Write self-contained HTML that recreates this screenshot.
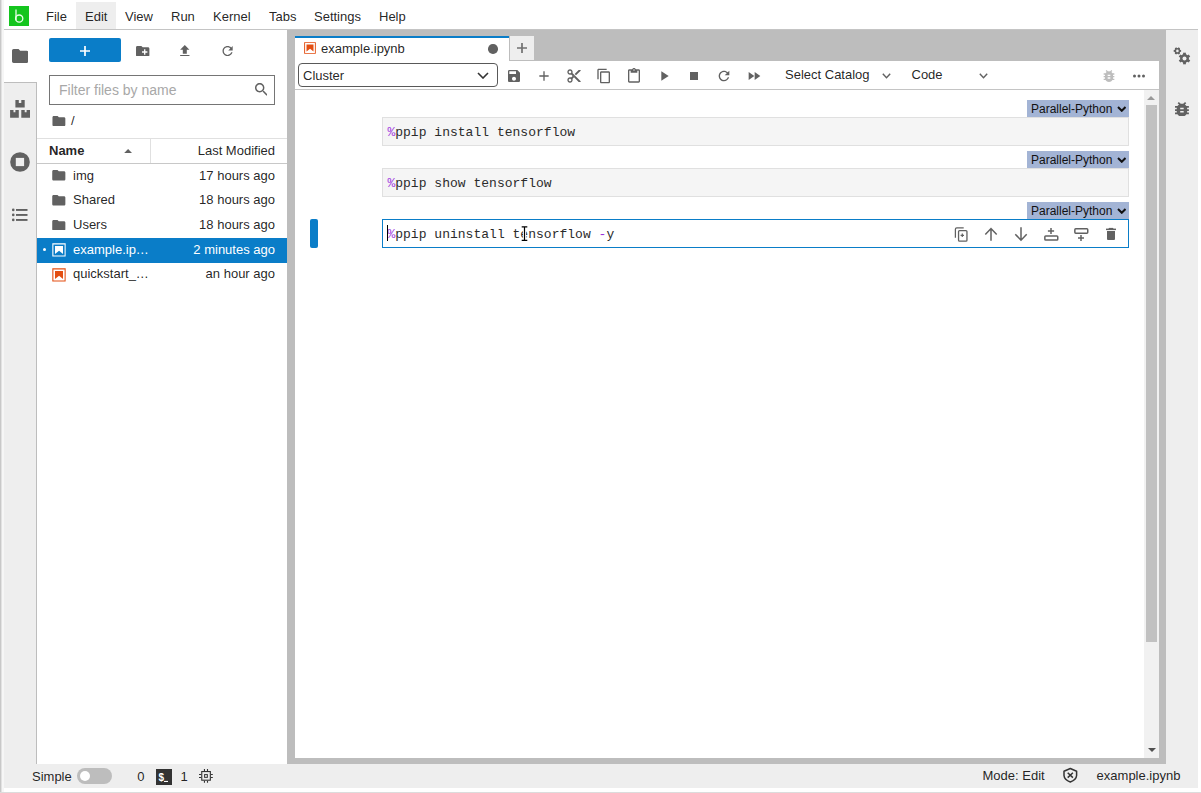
<!DOCTYPE html>
<html><head><meta charset="utf-8">
<style>
*{box-sizing:border-box;margin:0;padding:0}
html,body{width:1201px;height:793px;overflow:hidden;background:#fff;font-family:"Liberation Sans",sans-serif;font-size:13px;color:rgba(0,0,0,0.87)}
.a{position:absolute}
.t{position:absolute;white-space:nowrap;line-height:15px}
svg{position:absolute;display:block}
.ic{fill:#616161}
</style></head><body>
<!-- frame -->
<div class="a" style="left:0;top:0;width:1px;height:793px;background:#c8c8c8"></div>
<div class="a" style="left:1px;top:0;width:1px;height:793px;background:#e2e2e2"></div>
<div class="a" style="left:2px;top:0;width:2px;height:793px;background:#f6f6f6"></div>
<div class="a" style="left:0;top:792px;width:1201px;height:1px;background:#dcdcdc"></div>

<!-- menubar -->
<div class="a" style="left:4px;top:29px;width:1194px;height:1px;background:#c4c4c4"></div>
<div class="a" style="left:9px;top:6px;width:20px;height:20px;background:#14c51e"></div>
<svg style="left:9px;top:6px" width="20" height="20" viewBox="0 0 20 20"><path d="M7 3.5V14.2" stroke="#e8ffe8" stroke-width="1.3" fill="none"/><circle cx="10.2" cy="12.6" r="3.6" stroke="#e8ffe8" stroke-width="1.3" fill="none"/></svg>
<div class="a" style="left:76px;top:2px;width:40px;height:27px;background:#eeeeee"></div>
<div class="t" style="left:46px;top:9px">File</div>
<div class="t" style="left:85px;top:9px">Edit</div>
<div class="t" style="left:125px;top:9px">View</div>
<div class="t" style="left:171px;top:9px">Run</div>
<div class="t" style="left:213px;top:9px">Kernel</div>
<div class="t" style="left:269px;top:9px">Tabs</div>
<div class="t" style="left:314px;top:9px">Settings</div>
<div class="t" style="left:379px;top:9px">Help</div>

<!-- left sidebar -->
<div class="a" style="left:4px;top:82px;width:33px;height:682px;background:#eeeeee"></div>
<div class="a" style="left:4px;top:82px;width:32px;height:1px;background:#bdbdbd"></div>
<div class="a" style="left:36px;top:82px;width:1px;height:682px;background:#bdbdbd"></div>

<!-- file browser -->
<!-- file browser content -->
<div class="a" style="left:49px;top:38px;width:72px;height:24px;background:#0a7dc8;border-radius:2px"></div>
<svg style="left:80px;top:46px" width="10" height="10" viewBox="0 0 10 10"><path d="M5 0V10M0 5H10" stroke="#fff" stroke-width="1.7"/></svg>
<svg class="ic" style="left:136.3px;top:45.6px" width="13.4" height="10.7" viewBox="2 4 20 16"><path d="M20 6h-8l-2-2H4c-1.11 0-1.99.89-1.99 2L2 18c0 1.11.89 2 2 2h16c1.11 0 2-.89 2-2V8c0-1.11-.89-2-2-2zm-1 8h-3v3h-2v-3h-3v-2h3V9h2v3h3v2z"/></svg>
<svg class="ic" style="left:180.2px;top:44.9px" width="9.6" height="11.3" viewBox="5 3 14 17"><path d="M9 16h6v-6h4l-7-7-7 7h4zm-4 2h14v2H5z"/></svg>
<svg class="ic" style="left:221.7px;top:46px" width="11.2" height="10.2" viewBox="4 4 16 16"><path d="M17.65 6.35C16.2 4.9 14.21 4 12 4c-4.42 0-7.990 3.58-7.99 8s3.57 8 7.99 8c3.73 0 6.840-2.55 7.730-6h-2.080c-.82 2.33-3.040 4-5.650 4-3.310 0-6-2.690-6-6s2.690-6 6-6c1.660 0 3.140.69 4.220 1.780L13 11h7V4l-2.35 2.35z"/></svg>
<div class="a" style="left:49px;top:75px;width:226px;height:30px;border:1px solid #757575"></div>
<div class="t" style="left:59px;top:81.8px;font-size:14px;line-height:16px;color:#a8a8a8">Filter files by name</div>
<svg class="ic" style="left:254.6px;top:83.2px" width="12.7" height="12.7" viewBox="3 3 17.5 17.5"><path d="M15.5 14h-.79l-.28-.27C15.41 12.59 16 11.11 16 9.5 16 5.910 13.090 3 9.5 3S3 5.91 3 9.5 5.91 16 9.5 16c1.61 0 3.09-.59 4.23-1.57l.27.28v.79l5 4.99L20.49 19l-4.99-5zm-6 0C7.01 14 5 11.99 5 9.5S7.01 5 9.5 5 14 7.01 14 9.5 11.99 14 9.5 14z"/></svg>
<svg class="ic" style="left:52.2px;top:115.7px" width="13.8" height="10.3" viewBox="2 4 20 16"><path d="M10 4H4c-1.1 0-1.99.9-1.99 2L2 18c0 1.1.9 2 2 2h16c1.1 0 2-.9 2-2V8c0-1.1-.9-2-2-2h-8l-2-2z"/></svg>
<div class="t" style="left:71px;top:112.8px">/</div>
<div class="a" style="left:37px;top:138px;width:250px;height:1px;background:#e0e0e0"></div>
<div class="a" style="left:37px;top:162.5px;width:250px;height:1px;background:#c8c8c8"></div>
<div class="a" style="left:150px;top:138px;width:1px;height:25px;background:#e0e0e0"></div>
<div class="t" style="left:49px;top:143px;font-weight:bold">Name</div>
<svg style="left:123.9px;top:148.8px" width="8.2" height="4.3" viewBox="0 0 8 4"><path d="M0 4L4 0L8 4z" fill="#616161"/></svg>
<div class="t" style="left:150px;width:125px;top:143px;text-align:right">Last Modified</div>
<svg class="ic" style="left:52.2px;top:170.4px" width="13.6" height="10.5" viewBox="2 4 20 16"><path d="M10 4H4c-1.1 0-1.99.9-1.99 2L2 18c0 1.1.9 2 2 2h16c1.1 0 2-.9 2-2V8c0-1.1-.9-2-2-2h-8l-2-2z"/></svg>
<div class="t" style="left:73px;top:167.6px;color:rgba(0,0,0,0.87)">img</div>
<div class="t" style="left:150px;width:125px;text-align:right;top:167.6px;color:rgba(0,0,0,0.87)">17 hours ago</div>
<svg class="ic" style="left:52.2px;top:195.1px" width="13.6" height="10.5" viewBox="2 4 20 16"><path d="M10 4H4c-1.1 0-1.99.9-1.99 2L2 18c0 1.1.9 2 2 2h16c1.1 0 2-.9 2-2V8c0-1.1-.9-2-2-2h-8l-2-2z"/></svg>
<div class="t" style="left:73px;top:192.3px;color:rgba(0,0,0,0.87)">Shared</div>
<div class="t" style="left:150px;width:125px;text-align:right;top:192.3px;color:rgba(0,0,0,0.87)">18 hours ago</div>
<svg class="ic" style="left:52.2px;top:219.7px" width="13.6" height="10.5" viewBox="2 4 20 16"><path d="M10 4H4c-1.1 0-1.99.9-1.99 2L2 18c0 1.1.9 2 2 2h16c1.1 0 2-.9 2-2V8c0-1.1-.9-2-2-2h-8l-2-2z"/></svg>
<div class="t" style="left:73px;top:216.9px;color:rgba(0,0,0,0.87)">Users</div>
<div class="t" style="left:150px;width:125px;text-align:right;top:216.9px;color:rgba(0,0,0,0.87)">18 hours ago</div>
<div class="a" style="left:37px;top:238.2px;width:250px;height:24.5px;background:#0a7dc8"></div>
<div class="a" style="left:42.5px;top:248.3px;width:3px;height:3px;border-radius:50%;background:#fff"></div>
<svg style="left:51px;top:242.0px" width="16" height="16" viewBox="0 0 22 22"><g fill="#fff"><path d="M18.7 3.3v15.4H3.3V3.3h15.4m1.5-1.5H1.8v18.3h18.3l.1-18.3z"/><path d="M16.5 16.5l-5.4-4.3-5.6 4.3v-11h11z"/></g></svg>
<div class="t" style="left:73px;top:241.5px;color:#fff">example.ip…</div>
<div class="t" style="left:150px;width:125px;text-align:right;top:241.5px;color:#fff">2 minutes ago</div>
<svg style="left:51px;top:266.8px" width="16" height="16" viewBox="0 0 22 22"><g fill="#E34E12"><path d="M18.7 3.3v15.4H3.3V3.3h15.4m1.5-1.5H1.8v18.3h18.3l.1-18.3z"/><path d="M16.5 16.5l-5.4-4.3-5.6 4.3v-11h11z"/></g></svg>
<div class="t" style="left:73px;top:266.3px;color:rgba(0,0,0,0.87)">quickstart_…</div>
<div class="t" style="left:150px;width:125px;text-align:right;top:266.3px;color:rgba(0,0,0,0.87)">an hour ago</div>


<!-- splitter / dock grey -->
<div class="a" style="left:287px;top:30px;width:879px;height:734px;background:#bdbdbd"></div>
<!-- right sidebar -->
<div class="a" style="left:1166px;top:30px;width:32px;height:734px;background:#eeeeee"></div>

<!-- notebook panel -->
<div class="a" style="left:295px;top:61px;width:864px;height:697px;background:#fff"></div>

<!-- notebook tab -->
<div class="a" style="left:295px;top:36px;width:214px;height:25px;background:#fff"></div>
<div class="a" style="left:295px;top:36px;width:214px;height:2px;background:#0a7dc8"></div>
<svg style="left:302.9px;top:40.9px" width="14" height="14" viewBox="0 0 22 22"><g fill="#E34E12"><path d="M18.7 3.3v15.4H3.3V3.3h15.4m1.5-1.5H1.8v18.3h18.3l.1-18.3z"/><path d="M16.5 16.5l-5.4-4.3-5.6 4.3v-11h11z"/></g></svg>
<div class="t" style="left:321px;top:41px">example.ipynb</div>
<div class="a" style="left:488px;top:44px;width:9.5px;height:9.5px;border-radius:50%;background:#616161"></div>
<div class="a" style="left:510px;top:36px;width:24px;height:24px;background:#eeeeee"></div>
<svg style="left:517px;top:43px" width="10" height="10" viewBox="0 0 10 10"><path d="M5 0V10M0 5H10" stroke="#707070" stroke-width="1.7"/></svg>
<!-- toolbar -->
<div class="a" style="left:295px;top:89px;width:864px;height:1px;background:#c4c4c4"></div>
<div class="a" style="left:298px;top:63px;width:200px;height:24px;border:1px solid #595959;border-radius:4px"></div>
<div class="t" style="left:303px;top:68px">Cluster</div>
<svg style="left:477px;top:72px" width="12" height="7" viewBox="0 0 12 7"><path d="M1 1L6 6L11 1" stroke="#333" stroke-width="1.6" fill="none"/></svg>
<svg style="left:506px;top:68px" width="16" height="16" viewBox="0 0 24 24"><path fill="#616161" d="M17 3H5c-1.11 0-2 .9-2 2v14c0 1.1.89 2 2 2h14c1.1 0 2-.9 2-2V7l-4-4zm-5 16c-1.66 0-3-1.34-3-3s1.34-3 3-3 3 1.34 3 3-1.34 3-3 3zm3-10H5V5h10v4z"/></svg>
<svg style="left:536px;top:68px" width="16" height="16" viewBox="0 0 24 24"><path fill="#616161" d="M19 13h-6v6h-2v-6H5v-2h6V5h2v6h6v2z"/></svg>
<svg style="left:566px;top:68px" width="16" height="16" viewBox="0 0 24 24"><path fill="#616161" d="M9.64 7.64c.23-.5.36-1.05.36-1.64 0-2.21-1.79-4-4-4S2 3.79 2 6s1.79 4 4 4c.59 0 1.14-.13 1.640-.36L10 12l-2.36 2.36C7.14 14.13 6.59 14 6 14c-2.21 0-4 1.79-4 4s1.79 4 4 4 4-1.79 4-4c0-.59-.13-1.14-.36-1.64L12 14l7 7h3v-1L9.64 7.64zM6 8c-1.1 0-2-.89-2-2s.9-2 2-2 2 .89 2 2-.9 2-2 2zm0 12c-1.1 0-2-.89-2-2s.9-2 2-2 2 .89 2 2-.9 2-2 2zm6-7.5c-.28 0-.5-.22-.5-.5s.22-.5.5-.5.5.22.5.5-.22.5-.5.5zM19 3l-6 6 2 2 7-7V3z"/></svg>
<svg style="left:596px;top:68px" width="16" height="16" viewBox="0 0 24 24"><path fill="#616161" d="M16 1H4c-1.1 0-2 .9-2 2v14h2V3h12V1zm3 4H8c-1.1 0-2 .9-2 2v14c0 1.1.9 2 2 2h11c1.1 0 2-.9 2-2V7c0-1.1-.9-2-2-2zm0 16H8V7h11v14z"/></svg>
<svg style="left:626px;top:68px" width="16" height="16" viewBox="0 0 24 24"><path fill="#616161" d="M19 2h-4.18C14.4.84 13.3 0 12 0c-1.3 0-2.4.84-2.82 2H5c-1.1 0-2 .9-2 2v16c0 1.1.9 2 2 2h14c1.1 0 2-.9 2-2V4c0-1.1-.9-2-2-2zm-7 0c.55 0 1 .45 1 1s-.45 1-1 1-1-.45-1-1 .45-1 1-1zm7 18H5V4h2v3h10V4h2v16z"/></svg>
<svg style="left:656px;top:68px" width="16" height="16" viewBox="0 0 24 24"><path fill="#616161" d="M8 5v14l11-7z"/></svg>
<svg style="left:686px;top:68px" width="16" height="16" viewBox="0 0 24 24"><path fill="#616161" d="M6 6h12v12H6z"/></svg>
<svg style="left:716px;top:68px" width="16" height="16" viewBox="0 0 24 24"><path fill="#616161" d="M17.65 6.35C16.2 4.9 14.21 4 12 4c-4.42 0-7.99 3.58-7.99 8s3.57 8 7.99 8c3.73 0 6.84-2.55 7.73-6h-2.08c-.82 2.33-3.04 4-5.65 4-3.31 0-6-2.69-6-6s2.69-6 6-6c1.66 0 3.14.69 4.22 1.78L13 11h7V4l-2.35 2.35z"/></svg>
<svg style="left:746px;top:68px" width="16" height="16" viewBox="0 0 24 24"><path fill="#616161" d="M4 18l8.5-6L4 6v12zm9-12v12l8.5-6L13 6z"/></svg>
<div class="t" style="left:785px;top:67.2px">Select Catalog</div>
<svg style="left:881.5px;top:72.5px" width="9" height="6" viewBox="0 0 9 6"><path d="M0.8 0.8L4.5 4.8L8.2 0.8" stroke="#616161" stroke-width="1.4" fill="none"/></svg>
<div class="t" style="left:911.5px;top:67.2px">Code</div>
<svg style="left:978.5px;top:72.5px" width="9" height="6" viewBox="0 0 9 6"><path d="M0.8 0.8L4.5 4.8L8.2 0.8" stroke="#616161" stroke-width="1.4" fill="none"/></svg>
<svg style="left:1100.8px;top:67.8px" width="16" height="16" viewBox="0 0 24 24"><path fill="#bdbdbd" d="M20 8h-2.81c-.45-.78-1.07-1.45-1.82-1.96L17 4.41 15.59 3l-2.17 2.17C12.96 5.06 12.49 5 12 5c-.49 0-.96.06-1.41.17L8.41 3 7 4.41l1.62 1.63C7.88 6.55 7.26 7.22 6.81 8H4v2h2.09c-.05.33-.09.66-.09 1v1H4v2h2v1c0 .34.04.67.09 1H4v2h2.81c1.04 1.79 2.97 3 5.19 3s4.15-1.21 5.19-3H20v-2h-2.09c.05-.33.09-.66.09-1v-1h2v-2h-2v-1c0-.34-.04-.67-.09-1H20V8zm-6 8h-4v-2h4v2zm0-4h-4v-2h4v2z"/></svg>
<svg style="left:1132px;top:73px" width="14" height="6" viewBox="0 0 14 6"><circle cx="2.5" cy="3" r="1.5" fill="#616161"/><circle cx="7" cy="3" r="1.5" fill="#616161"/><circle cx="11.5" cy="3" r="1.5" fill="#616161"/></svg>
<!-- scrollbar -->
<div class="a" style="left:1144px;top:90px;width:15px;height:668px;background:#f1f1f1"></div>
<svg style="left:1147.2px;top:96px" width="8" height="4" viewBox="0 0 8 4"><path d="M0 4L4 0L8 4z" fill="#999"/></svg>
<div class="a" style="left:1146px;top:105px;width:11px;height:537px;background:#c1c1c1"></div>
<svg style="left:1147.5px;top:748px" width="8" height="4" viewBox="0 0 8 4"><path d="M0 0L4 4L8 0z" fill="#505050"/></svg>
<div class="a" style="left:1027px;top:100px;width:102px;height:17px;background:#a3b4d5"></div>
<div class="t" style="left:1031px;top:101.9px;font-size:12px;line-height:14px;color:#111">Parallel-Python</div>
<svg style="left:1116.5px;top:105.5px" width="9.5" height="6" viewBox="0 0 9.5 6"><path d="M1 1L4.75 4.8L8.5 1" stroke="#111" stroke-width="2" fill="none"/></svg>
<div class="a" style="left:382px;top:117px;width:747px;height:29px;background:#f5f5f5;border:1px solid #e0e0e0"></div>
<div class="t" style="left:387.4px;top:123.8px;font-family:'Liberation Mono',monospace;font-size:13px;line-height:17px;letter-spacing:0.02px;color:#2b2b2b"><span style="color:#a23de0">%</span>ppip install tensorflow</div>
<div class="a" style="left:1027px;top:151px;width:102px;height:17px;background:#a3b4d5"></div>
<div class="t" style="left:1031px;top:152.9px;font-size:12px;line-height:14px;color:#111">Parallel-Python</div>
<svg style="left:1116.5px;top:156.5px" width="9.5" height="6" viewBox="0 0 9.5 6"><path d="M1 1L4.75 4.8L8.5 1" stroke="#111" stroke-width="2" fill="none"/></svg>
<div class="a" style="left:382px;top:168px;width:747px;height:29px;background:#f5f5f5;border:1px solid #e0e0e0"></div>
<div class="t" style="left:387.4px;top:174.8px;font-family:'Liberation Mono',monospace;font-size:13px;line-height:17px;letter-spacing:0.02px;color:#2b2b2b"><span style="color:#a23de0">%</span>ppip show tensorflow</div>
<div class="a" style="left:1027px;top:202px;width:102px;height:17px;background:#a3b4d5"></div>
<div class="t" style="left:1031px;top:203.9px;font-size:12px;line-height:14px;color:#111">Parallel-Python</div>
<svg style="left:1116.5px;top:207.5px" width="9.5" height="6" viewBox="0 0 9.5 6"><path d="M1 1L4.75 4.8L8.5 1" stroke="#111" stroke-width="2" fill="none"/></svg>
<div class="a" style="left:382px;top:219px;width:747px;height:29px;background:#fff;border:1px solid #0a7dc8"></div>
<div class="t" style="left:387.4px;top:225.8px;font-family:'Liberation Mono',monospace;font-size:13px;line-height:17px;letter-spacing:0.02px;color:#2b2b2b"><span style="color:#a23de0">%</span>ppip uninstall tensorflow <span style="color:#9a30d8">-</span>y</div>
<div class="a" style="left:310px;top:219px;width:8px;height:29px;background:#0a7dc8;border-radius:2px"></div>
<div class="a" style="left:386.5px;top:225px;width:1px;height:16px;background:#000"></div>
<svg style="left:11.6px;top:48.8px" width="16.4" height="13.9" viewBox="2 4 20 16" preserveAspectRatio="none"><path fill="#616161" d="M10 4H4c-1.1 0-1.99.9-1.99 2L2 18c0 1.1.9 2 2 2h16c1.1 0 2-.9 2-2V8c0-1.1-.9-2-2-2h-8l-2-2z"/></svg>
<svg style="left:10px;top:100px" width="20" height="18" viewBox="0 0 20 18"><g fill="#616161">
<path d="M5.4 0H8.8V2.9H11.3V0H14.7V7.6H5.4z"/>
<path d="M0.1 10H3.5V12.2H5.4V10H8.8V17.8H0.1z"/>
<path d="M11.3 10H14.7V12.2H16.6V10H20V17.8H11.3z"/>
</g></svg>
<svg style="left:10px;top:152px" width="20" height="20" viewBox="0 0 20 20"><circle cx="10" cy="10" r="9.8" fill="#616161"/><rect x="5.8" y="5.9" width="8.3" height="8.2" fill="#eeeeee"/></svg>
<svg style="left:11px;top:207px" width="18" height="15" viewBox="0 0 18 15"><g fill="#616161">
<circle cx="2.25" cy="2.9" r="1.3"/><circle cx="2.25" cy="7.9" r="1.3"/><circle cx="2.25" cy="12.9" r="1.3"/>
<rect x="5" y="2" width="11.5" height="1.9"/><rect x="5" y="7" width="11.5" height="1.9"/><rect x="5" y="12" width="11.5" height="1.9"/>
</g></svg>
<svg style="left:1166px;top:40px" width="32" height="30" viewBox="0 0 32 30"><circle cx="11.4" cy="10.9" r="2.8" fill="#616161"/><rect x="10.450000000000001" y="7.2" width="1.9" height="3.7" fill="#616161" transform="rotate(30 11.4 10.9)"/><rect x="10.450000000000001" y="7.2" width="1.9" height="3.7" fill="#616161" transform="rotate(90 11.4 10.9)"/><rect x="10.450000000000001" y="7.2" width="1.9" height="3.7" fill="#616161" transform="rotate(150 11.4 10.9)"/><rect x="10.450000000000001" y="7.2" width="1.9" height="3.7" fill="#616161" transform="rotate(210 11.4 10.9)"/><rect x="10.450000000000001" y="7.2" width="1.9" height="3.7" fill="#616161" transform="rotate(270 11.4 10.9)"/><rect x="10.450000000000001" y="7.2" width="1.9" height="3.7" fill="#616161" transform="rotate(330 11.4 10.9)"/><circle cx="11.4" cy="10.9" r="1.3" fill="#eeeeee"/><circle cx="18.5" cy="18.5" r="4.4" fill="#616161"/><rect x="17.1" y="12.7" width="2.8" height="5.8" fill="#616161" transform="rotate(0 18.5 18.5)"/><rect x="17.1" y="12.7" width="2.8" height="5.8" fill="#616161" transform="rotate(60 18.5 18.5)"/><rect x="17.1" y="12.7" width="2.8" height="5.8" fill="#616161" transform="rotate(120 18.5 18.5)"/><rect x="17.1" y="12.7" width="2.8" height="5.8" fill="#616161" transform="rotate(180 18.5 18.5)"/><rect x="17.1" y="12.7" width="2.8" height="5.8" fill="#616161" transform="rotate(240 18.5 18.5)"/><rect x="17.1" y="12.7" width="2.8" height="5.8" fill="#616161" transform="rotate(300 18.5 18.5)"/><circle cx="18.5" cy="18.5" r="2.0" fill="#eeeeee"/></svg>
<svg style="left:1175px;top:101.7px" width="13.9" height="14.7" viewBox="4 3 16 18" preserveAspectRatio="none"><path fill="#616161" d="M20 8h-2.81c-.45-.78-1.07-1.45-1.82-1.96L17 4.41 15.59 3l-2.17 2.17C12.96 5.06 12.49 5 12 5c-.49 0-.96.06-1.41.17L8.41 3 7 4.41l1.62 1.63C7.88 6.55 7.26 7.22 6.81 8H4v2h2.09c-.05.33-.09.66-.09 1v1H4v2h2v1c0 .34.04.67.09 1H4v2h2.81c1.04 1.79 2.97 3 5.19 3s4.15-1.21 5.19-3H20v-2h-2.09c.05-.33.09-.66.09-1v-1h2v-2h-2v-1c0-.34-.04-.67-.09-1H20V8zm-6 8h-4v-2h4v2zm0-4h-4v-2h4v2z"/></svg>
<svg style="left:950px;top:222px" width="180" height="24" viewBox="0 0 180 24"><g fill="none" stroke="#616161">
<path d="M5.4 15.7V7.3Q5.4 5.9 6.8 5.9H13.7" stroke-width="1.25"/>
<rect x="8.55" y="8.55" width="8.4" height="10.6" rx="1" stroke-width="1.3"/>
<path d="M12.3 11.6V15M10.6 13.3H14" stroke-width="1.2"/>
<path d="M35.3 12.5L41 6.5L46.7 12.5M41 6.3V18.7" stroke-width="1.5"/>
<path d="M65.3 12.2L71 18.2L76.7 12.2M71 5.3V18" stroke-width="1.5"/>
<path d="M101 6.1V12M97.9 9.05H104.1" stroke-width="1.5"/>
<rect x="94.85" y="13.95" width="12.9" height="4.1" rx="0.9" stroke-width="1.5"/>
<rect x="124.85" y="6.85" width="12.9" height="4.3" rx="0.9" stroke-width="1.5"/>
<path d="M131 13V19M128 16H134" stroke-width="1.5"/>
</g><g fill="#616161">
<path d="M156 6.6H166V8.1H156z"/><path d="M158.7 5.9H163.3V7H158.7z"/>
<path d="M157 9H165V16.9Q165 17.9 164 17.9H158Q157 17.9 157 16.9z"/>
</g></svg>
<svg style="left:518px;top:223px" width="14" height="21" viewBox="0 0 14 21"><g fill="none" stroke-linecap="square">
<path d="M4.3 3.9H8.7M6.5 3.9V17.4M4.3 17.4H8.7" stroke="#fff" stroke-width="3.2"/>
<path d="M4.3 3.9H8.7M6.5 3.9V17.4M4.3 17.4H8.7" stroke="#000" stroke-width="1.2"/>
</g></svg>
<!-- status bar -->
<div class="a" style="left:4px;top:764px;width:1194px;height:24px;background:#eeeeee"></div>
<div class="t" style="left:32px;top:769px">Simple</div>
<div class="a" style="left:77px;top:768px;width:35px;height:16px;border-radius:8px;background:#bdbdbd"></div>
<div class="a" style="left:79.95px;top:770.95px;width:10px;height:10px;border-radius:50%;background:#fff"></div>
<div class="t" style="left:137.3px;top:769px">0</div>
<div class="a" style="left:156.3px;top:769.1px;width:15.5px;height:15.5px;background:#333"></div>
<svg style="left:154px;top:766px" width="20" height="20" viewBox="0 0 20 20"><text x="4.4" y="15" font-size="10" font-weight="bold" fill="#fff" font-family="Liberation Sans">$</text><rect x="10" y="14.9" width="4" height="1.1" fill="#fff"/></svg>
<div class="t" style="left:180.5px;top:769px">1</div>
<svg style="left:196px;top:766px" width="20" height="20" viewBox="0 0 20 20"><g fill="none" stroke="#333">
<rect x="5.75" y="5.55" width="8.6" height="8.65" stroke-width="1.1"/>
<rect x="8.6" y="8.6" width="2.75" height="2.75" stroke-width="1"/>
<path d="M8.45 3.1V5M11.5 3.1V5M8.45 14.7V16.8M11.5 14.7V16.8M3 8.45H5.2M3 11.5H5.2M14.9 8.45H16.8M14.9 11.5H16.8" stroke-width="1.1"/>
</g></svg>
<div class="t" style="left:982.5px;top:768px">Mode: Edit</div>
<svg style="left:1062px;top:767px" width="17" height="17" viewBox="0 0 17 17"><g fill="none" stroke="#333">
<path d="M8.3 1.5L2 4.2V8.5Q2.3 12.8 8.3 15Q14.3 12.8 14.6 8.5V4.2z" stroke-width="1.5" stroke-linejoin="round"/>
<path d="M5.7 5.8L10.9 10.6M10.9 5.8L5.7 10.6" stroke-width="1.5"/>
</g></svg>
<div class="t" style="left:1096.6px;top:768px">example.ipynb</div>

</body></html>
